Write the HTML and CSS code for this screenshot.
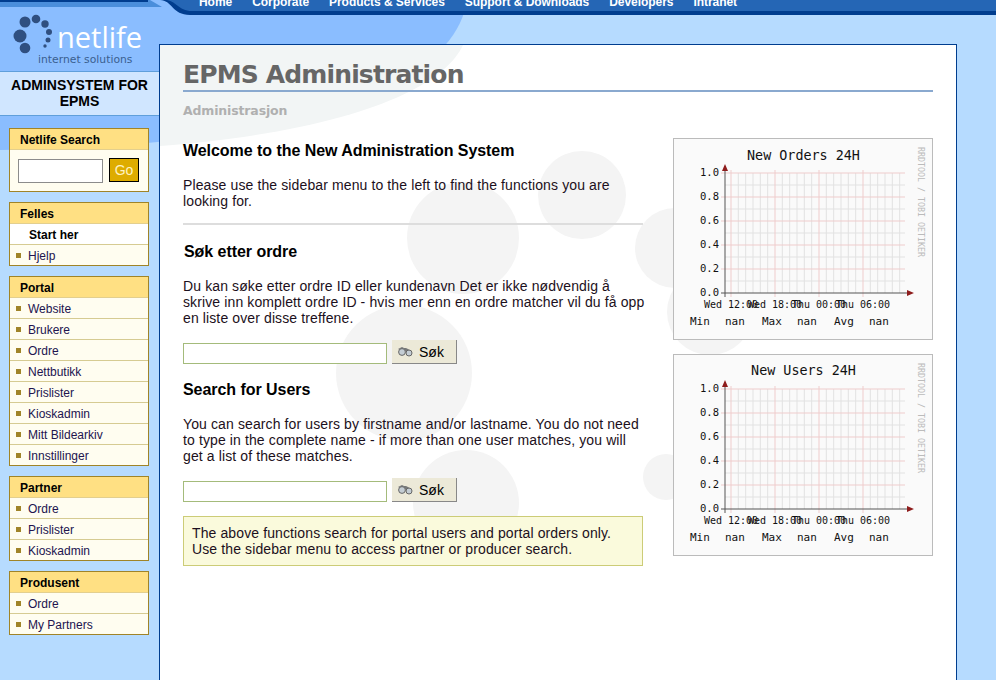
FILE: index.html
```html
<!DOCTYPE html>
<html lang="no">

<head>
    <meta charset="UTF-8">
    <title>EPMS Administration</title>
    <link rel="stylesheet" href="styles.css">
</head>

<body>
    <svg class="backdrop" width="996" height="680" aria-hidden="true">
        <path d="M0 150C190 150 450 115 467 0H0Z" fill="#8abdff" />
        <path d="M0 0H150L162 7H0Z" fill="#4a8edb" />
        <path d="M0 2H148V0H160C172 0 172 15 190 15H996V0H0Z" fill="#003d8f" />
        <path d="M165 0C176 0 178 11 192 11H996V0Z" fill="#2566b5" />
    </svg>

    <svg width="0" height="0" class="defs" aria-hidden="true">
        <defs>
            <g id="grid" transform="translate(-1 -1)">
                <path class="minor"
                    d="M52 47H232M52 71H232M52 95H232M52 119H232M52 143H232M65.3 35V155M72.7 35V155M80 35V155M87.3 35V155M94.7 35V155M109.3 35V155M116.7 35V155M124 35V155M131.3 35V155M138.7 35V155M153.3 35V155M160.7 35V155M168 35V155M175.3 35V155M182.7 35V155M197.3 35V155M204.7 35V155M212 35V155M219.3 35V155M226.7 35V155" />
                <path class="major"
                    d="M48 35H232M48 59H232M48 83H232M48 107H232M48 131H232M58 32V159M102 32V159M146 32V159M190 32V159" />
                <path class="axis" d="M52 33V159M48 155H236" />
                <path class="arrow" d="M49 33L52 26L55 33ZM234 152L241 155L234 158Z" />
                <g class="chart-y">
                    <text x="46" y="38">1.0</text>
                    <text x="46" y="62">0.8</text>
                    <text x="46" y="86">0.6</text>
                    <text x="46" y="110">0.4</text>
                    <text x="46" y="134">0.2</text>
                    <text x="46" y="158">0.0</text>
                </g>
                <g class="chart-x">
                    <text x="58" y="170">Wed 12:00</text>
                    <text x="102" y="170">Wed 18:00</text>
                    <text x="146" y="170">Thu 00:00</text>
                    <text x="190" y="170">Thu 06:00</text>
                </g>
                <g class="chart-legend">
                    <text x="17" y="187">Min</text>
                    <text x="52" y="187">nan</text>
                    <text x="89" y="187">Max</text>
                    <text x="124" y="187">nan</text>
                    <text x="161" y="187">Avg</text>
                    <text x="196" y="187">nan</text>
                </g>
                <text class="chart-credit" transform="translate(245 9) rotate(90)">RRDTOOL / TOBI OETIKER</text>
            </g>
            <g id="binoculars">
                <path d="M1 3L5 1L7 2L9 2L11 3L15 6L11 6L8 5L5 5Z" fill="#77797a" />
                <circle cx="5" cy="6" r="3.4" fill="#c4cdd4" stroke="#666" />
                <circle cx="12" cy="7" r="3" fill="#c4cdd4" stroke="#666" />
            </g>
        </defs>
    </svg>

    <header class="topbar">
        <nav class="topnav">
            <a>Home</a>
            <a>Corporate</a>
            <a>Products &amp; Services</a>
            <a>Support &amp; Downloads</a>
            <a>Developers</a>
            <a>Intranet</a>
        </nav>
    </header>

    <div class="page">
        <aside class="sidebar">
            <div class="logo">
                <svg class="logo-dots" width="54" height="54" aria-hidden="true">
                    <g fill="#2f4f80">
                        <circle cx="20" cy="36" r="6.5" />
                        <circle cx="25" cy="22" r="5.5" />
                        <circle cx="36" cy="19" r="4.3" />
                        <circle cx="45" cy="24" r="3.7" />
                        <circle cx="49" cy="32" r="3" />
                        <circle cx="48" cy="40" r="2.5" />
                        <circle cx="45" cy="46" r="1.7" />
                        <circle cx="25" cy="48" r="5.3" />
                    </g>
                </svg>
                <div class="logo-name">netlife</div>
                <div class="logo-tag">internet solutions</div>
            </div>
            <div class="system-name">ADMINSYSTEM FOR EPMS</div>

            <section class="box">
                <h4>Netlife Search</h4>
                <form class="box-search">
                    <input type="text">
                    <button type="button">Go</button>
                </form>
            </section>

            <section class="box">
                <h4>Felles</h4>
                <ul>
                    <li class="current">Start her</li>
                    <li>Hjelp</li>
                </ul>
            </section>

            <section class="box">
                <h4>Portal</h4>
                <ul>
                    <li>Website</li>
                    <li>Brukere</li>
                    <li>Ordre</li>
                    <li>Nettbutikk</li>
                    <li>Prislister</li>
                    <li>Kioskadmin</li>
                    <li>Mitt Bildearkiv</li>
                    <li>Innstillinger</li>
                </ul>
            </section>

            <section class="box">
                <h4>Partner</h4>
                <ul>
                    <li>Ordre</li>
                    <li>Prislister</li>
                    <li>Kioskadmin</li>
                </ul>
            </section>

            <section class="box">
                <h4>Produsent</h4>
                <ul>
                    <li>Ordre</li>
                    <li>My Partners</li>
                </ul>
            </section>
        </aside>

        <main class="panel">
            <svg class="panel-bg" width="795" height="636" aria-hidden="true">
                <path d="M0 0H303C285 40 200 85 0 101Z" fill="#f2f5f5" />
                <g fill="#f4f4f4">
                    <circle cx="303" cy="193" r="56" />
                    <circle cx="422" cy="150" r="44" />
                    <circle cx="515" cy="203" r="40" />
                    <circle cx="550" cy="267" r="43" />
                    <circle cx="244" cy="328" r="68" />
                    <circle cx="306" cy="458" r="53" />
                    <circle cx="506" cy="432" r="23" />
                </g>
            </svg>

            <h1>EPMS Administration</h1>
            <h5>Administrasjon</h5>

            <div class="columns">
                <div class="content">
                    <h3>Welcome to the New Administration System</h3>
                    <p>Please use the sidebar menu to the left to find the functions you are looking for.</p>
                    <hr>

                    <h3 class="search-title">Søk etter ordre</h3>
                    <p>Du kan søke etter ordre ID eller kundenavn Det er ikke nødvendig å skrive inn komplett ordre ID - hvis mer enn en ordre matcher vil du få opp en liste over disse treffene.</p>
                    <form class="search">
                        <input type="text">
                        <button type="button">
                            <svg width="16" height="11" aria-hidden="true"><use href="#binoculars" /></svg>
                            Søk
                        </button>
                    </form>

                    <h3>Search for Users</h3>
                    <p>You can search for users by firstname and/or lastname. You do not need to type in the complete name - if more than one user matches, you will get a list of these matches.</p>
                    <form class="search">
                        <input type="text">
                        <button type="button">
                            <svg width="16" height="11" aria-hidden="true"><use href="#binoculars" /></svg>
                            Søk
                        </button>
                    </form>

                    <div class="note">The above functions search for portal users and portal orders only. Use the sidebar menu to access partner or producer search.</div>
                </div>

                <div class="graphs">
                    <svg class="graph" width="260" height="202">
                        <text class="chart-title" x="129.5" y="21">New Orders 24H</text>
                        <use href="#grid" />
                    </svg>
                    <svg class="graph" width="260" height="202">
                        <text class="chart-title" x="129.5" y="20">New Users 24H</text>
                        <use href="#grid" />
                    </svg>
                </div>
            </div>
        </main>
    </div>
</body>

</html>
```

FILE: styles.css
```css
* {
    padding: 0;
    margin: 0;
    box-sizing: border-box;
}

html,
body {
    height: 680px;
    overflow: hidden;
}

body {
    position: relative;
    background: #b6dbff;
    font-family: "Liberation Sans", Arial, sans-serif;
    font-size: 14px;
    color: #1c1020;
}

.backdrop {
    position: absolute;
    left: 0;
    top: 0;
}

.defs {
    position: absolute;
}

/* top navigation, the text is cut off by the window */
.topbar {
    position: relative;
    height: 44px;
    overflow: hidden;
}

.topnav {
    display: flex;
    gap: 20px;
    margin-top: -8px;
    padding-left: 199px;
    font-size: 12px;
    font-weight: bold;
    letter-spacing: -0.05px;
    line-height: 20px;
    color: #fff;
}

.page {
    position: relative;
    display: flex;
    align-items: flex-start;
}

/* sidebar */
.sidebar {
    width: 159px;
    margin-top: -44px;
    flex-shrink: 0;
}

.logo {
    position: relative;
    height: 71px;
}

.logo-dots {
    position: absolute;
    left: 0;
    top: 0;
}

.logo-name {
    position: absolute;
    left: 57px;
    top: 22px;
    font-family: "Open Sans", sans-serif;
    font-size: 29px;
    line-height: 30px;
    color: #fff;
}

.logo-tag {
    position: absolute;
    left: 38px;
    top: 53px;
    font-family: "DejaVu Sans", sans-serif;
    font-size: 10.8px;
    line-height: 14px;
    color: #3a5f8f;
}

.system-name {
    height: 45px;
    padding: 5px 8px 0;
    background: #d0e6ff;
    border-top: 1px solid #5f9fdb;
    border-bottom: 1px solid #5f9fdb;
    font-weight: bold;
    font-size: 14px;
    line-height: 16px;
    text-align: center;
    color: #000;
    margin-bottom: 12px;
}

.box {
    width: 140px;
    margin: 0 0 10px 9px;
    background: #fffdf0;
    border: 1px solid #a08428;
}

.box h4 {
    height: 21px;
    padding: 1px 0 0 10px;
    background: #ffe083;
    border-bottom: 1px solid #e3cf8e;
    font-size: 12px;
    line-height: 21px;
    color: #000;
}

.box ul {
    list-style: none;
}

.box li {
    position: relative;
    height: 21px;
    padding: 1px 0 0 18px;
    border-bottom: 1px solid #d6cb92;
    font-size: 12px;
    line-height: 21px;
    color: #22144f;
}

.box li:last-child {
    height: 20px;
    border-bottom: 0;
}

.box li::before {
    content: "";
    position: absolute;
    left: 6px;
    top: 8px;
    width: 5px;
    height: 5px;
    background: #a08428;
}

.box li.current {
    padding-left: 19px;
    background: #fff;
    font-weight: bold;
    color: #000;
}

.box li.current::before {
    display: none;
}

.box-search {
    display: flex;
    align-items: center;
    gap: 6px;
    height: 41px;
    padding: 1px 0 0 8px;
}

.box-search input {
    width: 85px;
    height: 24px;
    border: 1px solid #8c8c8c;
    background: #fff;
}

.box-search button {
    width: 30px;
    height: 24px;
    margin-bottom: 2px;
    background: #deac00;
    border: 1px solid #000;
    font-family: inherit;
    font-size: 14px;
    color: #fff3c0;
}

/* main panel */
.panel {
    position: relative;
    width: 798px;
    height: 640px;
    margin-top: 0;
    padding: 0 23px 0 23px;
    background: #fff;
    border: 1px solid #003d8f;
    border-bottom: 0;
    overflow: hidden;
}

.panel-bg {
    position: absolute;
    left: 0;
    top: 0;
}

.panel h1 {
    position: relative;
    height: 47px;
    padding-top: 14px;
    border-bottom: 2px solid #8aa9cf;
    font-family: "DejaVu Sans", Verdana, sans-serif;
    font-size: 25px;
    letter-spacing: -0.85px;
    line-height: 32px;
    color: #666;
}

.panel h5 {
    position: relative;
    height: 46px;
    padding-top: 11px;
    font-family: "DejaVu Sans", Verdana, sans-serif;
    font-size: 12.5px;
    letter-spacing: -0.15px;
    line-height: 16px;
    color: #b0b0b0;
}

.columns {
    position: relative;
    display: flex;
    justify-content: space-between;
}

.content {
    width: 460px;
}

.content h3 {
    font-size: 16px;
    letter-spacing: -0.05px;
    line-height: 18px;
    margin-top: 4px;
    color: #000;
}

.content p {
    margin: 17px -2px 0 0;
    letter-spacing: 0.115px;
    line-height: 16px;
}

.content hr {
    height: 2px;
    margin: 14px 0 18px;
    border: 0;
    background: #ddd;
}

.content .search-title {
    padding-left: 1px;
    margin: 0 0 1px;
}

.search {
    display: flex;
    align-items: flex-end;
    gap: 5px;
    margin-top: 14px;
    margin-bottom: 17px;
}

.search input {
    width: 204px;
    height: 21px;
    background: #fff;
    border: 1px solid #a4bb7b;
}

.search button {
    display: flex;
    align-items: center;
    gap: 6px;
    width: 65px;
    height: 24px;
    padding-left: 5px;
    background: #ece9d8;
    border: 0;
    border-right: 1px solid #888;
    border-bottom: 1px solid #888;
    font-family: inherit;
    font-size: 14px;
    color: #000;
}

.note {
    height: 50px;
    margin-top: -3px;
    padding: 8px;
    background: #fafadc;
    border: 1px solid #cccc77;
    letter-spacing: 0.115px;
    line-height: 16px;
}

.graphs {
    display: flex;
    flex-direction: column;
    gap: 14px;
}

.graph {
    display: block;
    background: #fafafa;
    border: 1px solid #bbb;
}

/* chart parts */
.minor {
    stroke: #e2e2e2;
    fill: none;
}

.major {
    stroke: #efcccc;
    fill: none;
}

.axis {
    stroke: #555;
    fill: none;
}

.arrow {
    fill: #8e1c1c;
}

.chart-title,
.chart-y text,
.chart-x text,
.chart-legend text,
.chart-credit {
    font-family: "DejaVu Sans Mono", monospace;
    fill: #111;
}

.chart-title {
    font-size: 13.4px;
    text-anchor: middle;
}

.chart-y text {
    font-size: 10.5px;
    text-anchor: end;
}

.chart-x text {
    font-size: 10px;
    text-anchor: middle;
}

.chart-legend text {
    font-size: 11px;
}

.chart-credit {
    font-size: 8.3px;
    fill: #bbb;
}
```
